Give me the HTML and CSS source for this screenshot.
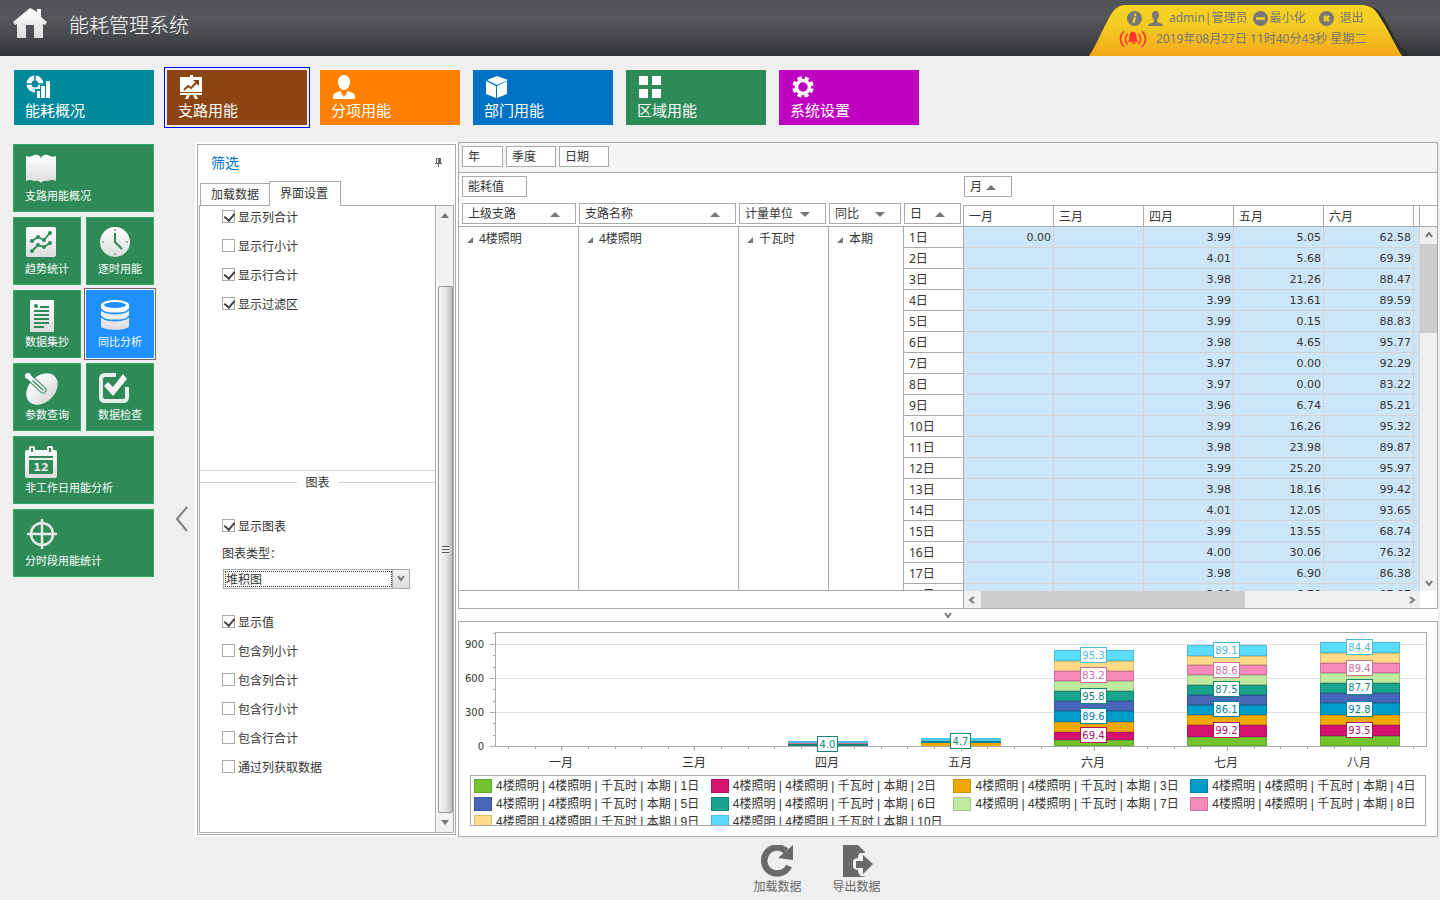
FILE: index.html
```html
<!DOCTYPE html>
<html lang="zh-CN">
<head>
<meta charset="utf-8">
<title>能耗管理系统</title>
<link rel="stylesheet" href="styles.css">
</head>
<body>
<div class="app">
  <header class="topbar">
    <svg class="home" viewBox="0 0 36 32"><defs><linearGradient id="silver" x1="0" y1="0" x2="0" y2="1"><stop offset="0" stop-color="#fff"/><stop offset="1" stop-color="#dcdcdc"/></linearGradient></defs><path fill="url(#silver)" d="M18 0 1 14l2 3 2-1v14h9V17h8v13h9V16l2 1 2-3-6-5V1h-4v3l-3-2z"/></svg>
    <h1>能耗管理系统</h1>
    <div class="account">
      <svg class="account-bg" viewBox="0 0 330 51"><defs><linearGradient id="gold" x1="0" y1="0" x2="0" y2="1"><stop offset="0" stop-color="#f6d422"/><stop offset=".4" stop-color="#f3cc22"/><stop offset="1" stop-color="#f3a81b"/></linearGradient></defs><path fill="#2b2e31" d="M0 51c12-3 12-19 21-35C27 4 34 0 42 0h230c14 0 20 5 27 18 9 16 12 30 31 33z"/><path fill="url(#gold)" d="M1 51c8-12 12-24 20-38C27 2 31 0 39 0h232c10 0 16 2 22 14 9 14 13 24 21 37z"/></svg>
      <div class="account-row">
        <svg class="i15" viewBox="0 0 15 15"><circle cx="7.500" cy="7.500" r="7.500" fill="#777"/><path d="M8.500 2.500 8 5M8 6l-1.500 6" stroke="#f5d020" stroke-width="2" fill="none"/></svg>
        <svg class="i15" viewBox="0 0 15 15"><path fill="#777" d="M7.500 0C5 0 4 2 4 4c0 2 1 4 2 5v2l-5 2-1 2h15l-1-2-5-2V9c1-1 2-3 2-5 0-2-1-4-3.500-4z"/></svg>
        <span class="user">admin|管理员</span>
        <button><svg class="i15" viewBox="0 0 15 15"><circle cx="7.500" cy="7.500" r="7.500" fill="#777"/><path d="M3 7.500h9" stroke="#f5d020" stroke-width="2.500"/></svg>最小化</button>
        <button class="quit"><svg class="i15" viewBox="0 0 15 15"><circle cx="7.500" cy="7.500" r="7.500" fill="#777"/><path d="m5 5 5 5m0-5-5 5" stroke="#f5d020" stroke-width="2.500"/></svg>退出</button>
      </div>
      <div class="account-row date">
        <svg class="bell" viewBox="0 0 30 20"><g fill="none" stroke="#f33" stroke-width="1.600"><path d="M5 1q-8 9 0 18M9 4q-5 6 0 12M25 1q8 9 0 18M21 4q5 6 0 12"/></g><path fill="#f33" d="M15 2c-3 0-4 3-4 6 0 3-1 4-2 5h12c-1-1-2-2-2-5 0-3-1-6-4-6zm-2 12h5l-2 2z"/></svg>
        <time>2019年08月27日 11时40分43秒 星期二</time>
      </div>
    </div>
  </header>

  <nav class="modules">
    <button class="module teal"><svg viewBox="0 0 26 24"><circle cx="9" cy="9" r="6" fill="none" stroke="#fff" stroke-width="5"/><path d="M9 0v7M0 9h6M12 9h6" stroke="#00889c" stroke-width="1.500"/><path d="M9 14h5v-4h5V5h7v19H9z" fill="#00889c"/><path fill="#fff" d="M11 16h3v7h-3zM15 11h4v12h-4zM20 6h4v17h-4z"/></svg>能耗概况</button>
    <button class="module brown selected"><svg viewBox="0 0 26 24"><path fill="#fff" d="M11 0h3v2h-3zM1 2h22v2H1zM1 4h22v13H1zM1 18h22v2H1zM8 20h3l-2 4H6zM14 20h3l2 4h-3z"/><path d="m5 15 4-4 3 2 6-6" fill="none" stroke="#8b4513" stroke-width="2"/><path fill="#8b4513" d="M14 5h6v6z"/></svg>支路用能</button>
    <button class="module orange"><svg viewBox="0 0 26 24"><path fill="#fff" d="M12 0C8 0 6 3 6 7c0 3 2 8 6 8s6-5 6-8c0-4-2-7-6-7zM8 16l-5 2c-2 1-2 3-2 6h22c0-3 0-5-2-6l-5-2-4 6z"/></svg>分项用能</button>
    <button class="module blue"><svg viewBox="0 0 26 24"><path fill="#fff" d="m12 1 11 4-11 5L2 5zM1 6l10 5v12L1 19zM22 6v13l-10 4V11z"/></svg>部门用能</button>
    <button class="module green"><svg viewBox="0 0 26 24"><path fill="#fff" d="M1 1h9v9H1zM14 1h9v9h-9zM1 14h9v9H1zM14 14h9v9h-9z"/></svg>区域用能</button>
    <button class="module purple"><svg viewBox="0 0 26 24"><circle cx="12" cy="12" r="6.500" fill="none" stroke="#fff" stroke-width="3.500"/><circle cx="12" cy="12" r="2" fill="none" stroke="#fff" stroke-width="0"/><circle cx="12" cy="12" r="9" fill="none" stroke="#fff" stroke-width="3.500" stroke-dasharray="4.100 2.970" transform="rotate(9 12 12)"/></svg>系统设置</button>
  </nav>

  <div class="body">
    <aside class="sidebar">
      <button class="tile wide"><svg viewBox="0 0 32 32"><path fill="url(#silver)" d="M1 2q4 2 8-1 5-1 7 3 2-4 7-3 4 3 8 1v25q-4-2-8 0-5-1-7 2-2-3-7-2-4-2-8 0z"/></svg>支路用能概况</button>
      <button class="tile"><svg viewBox="0 0 32 32"><rect x="1" y="0" width="30" height="30" rx="2" fill="url(#silver)"/><g stroke="#2e8b57" stroke-width="1.800" fill="none"><path d="m7 14 6-4 6 3 6-7M7 24l6-6 6 2 6-4"/></g><g fill="#2e8b57"><circle cx="7" cy="14" r="2"/><circle cx="13" cy="10" r="2"/><circle cx="19" cy="13" r="2"/><circle cx="25" cy="6" r="2"/><circle cx="7" cy="24" r="2"/><circle cx="13" cy="18" r="2"/><circle cx="19" cy="20" r="2"/><circle cx="25" cy="16" r="2"/></g></svg>趋势统计</button>
      <button class="tile"><svg viewBox="0 0 32 32"><circle cx="17" cy="15" r="15" fill="url(#silver)"/><path d="M17 6v9l7 7" fill="none" stroke="#2e8b57" stroke-width="2"/><path fill="#8ab8a0" d="M16 2h2v2h-2zM16 26h2v2h-2zM4 14h2v2H4zM28 14h2v2h-2z"/></svg>逐时用能</button>
      <button class="tile"><svg viewBox="0 0 32 32"><rect x="5" y="0" width="24" height="32" rx="1" fill="url(#silver)"/><circle cx="11" cy="6" r="2" fill="#2e8b57"/><path d="M15 7h9M9 11h15M9 15h15M9 19h15M9 23h15M9 27h10" stroke="#2e8b57" stroke-width="2"/></svg>数据集抄</button>
      <button class="tile selected"><svg viewBox="0 0 32 32"><path fill="url(#silver)" d="M3 5v21c0 5 28 5 28 0V5z"/><ellipse cx="17" cy="5" rx="14" ry="5" fill="#fff"/><ellipse cx="17" cy="5" rx="11" ry="3" fill="#1e90ff"/><path d="M3 9c2 6 26 6 28 0M3 16c2 6 26 6 28 0" fill="none" stroke="#1e90ff" stroke-width="1.800"/></svg>同比分析</button>
      <button class="tile"><svg viewBox="0 0 32 32"><ellipse cx="17" cy="16" rx="18" ry="13" transform="rotate(-45 17 16)" fill="url(#silver)"/><g stroke-linecap="round"><path d="m4 4 14 13" stroke="#2e8b57" stroke-width="7"/><path d="m4 4 14 13" stroke="#fff" stroke-width="5"/><path d="m8 8 10 9" stroke="#2e8b57" stroke-width="1.500"/></g><circle cx="3" cy="3" r="3" fill="#fff"/></svg>参数查询</button>
      <button class="tile"><svg viewBox="0 0 32 32"><path d="M18 2H7Q3 2 3 6v18q0 4 4 4h18q4 0 4-4V14" fill="none" stroke="#e8eeea" stroke-width="4"/><path fill="#f4f4f4" d="m6 13 4-4 5 5L25 1l4 5-14 17z"/></svg>数据检查</button>
      <button class="tile wide"><svg viewBox="0 0 32 32"><path fill="url(#silver)" d="M2 4h2V1q3-2 6 0v3h12V1q3-2 6 0v3h2q2 0 2 2v24q0 2-2 2H2q-2 0-2-2V6q0-2 2-2z"/><path fill="#2e8b57" d="M6 2h2v4H6zM24 2h2v4h-2zM4 10h24v2H4zM4 14h24v14H4z"/><text x="16" y="25" text-anchor="middle" class="cal">12</text></svg>非工作日用能分析</button>
      <button class="tile wide"><svg viewBox="0 0 32 32"><g fill="none" stroke="#e6ece8" stroke-width="2.500"><circle cx="17" cy="15" r="11"/><path d="M17 0v30M2 15h30"/></g></svg>分时段用能统计</button>
    </aside>
    <button class="collapse" aria-label="收起"><svg viewBox="0 0 14 26"><path d="M12 1 2 13l10 12" fill="none" stroke="#808080" stroke-width="2"/></svg></button>

    <div class="main">
      <div class="work">
        <section class="options">
          <div class="options-head"><h2>筛选</h2><svg viewBox="0 0 8 9"><path d="M2 0h5v5h1v1H5v3H4V6H1V5h1z" fill="#666"/><path d="M3 1h1v4H3z" fill="#fff"/></svg></div>
          <div class="tabs"><button>加载数据</button><button class="active">界面设置</button></div>
          <div class="options-body">
            <div class="options-content">
              <div class="group first">
                <label><input type="checkbox" checked>显示列合计</label>
                <label><input type="checkbox">显示行小计</label>
                <label><input type="checkbox" checked>显示行合计</label>
                <label><input type="checkbox" checked>显示过滤区</label>
              </div>
              <fieldset class="group">
                <legend>图表</legend>
                <label><input type="checkbox" checked>显示图表</label>
                <label class="caption" for="kind">图表类型：</label>
                <div class="combo"><select id="kind"><option>堆积图</option></select><svg viewBox="0 0 8 8"><path d="m1 1 3 4 3-4" fill="none" stroke="#777" stroke-width="2"/></svg></div>
                <label><input type="checkbox" checked>显示值</label>
                <label><input type="checkbox">包含列小计</label>
                <label><input type="checkbox">包含列合计</label>
                <label><input type="checkbox">包含行小计</label>
                <label><input type="checkbox">包含行合计</label>
                <label><input type="checkbox">通过列获取数据</label>
              </fieldset>
            </div>
            <div class="classic-bar"><i class="up"></i><div class="classic-thumb"><b></b></div><i class="down"></i></div>
          </div>
        </section>

        <div class="data">
          <section class="pivot">
            <div class="filter-bar"><button class="field w41">年</button><button class="field w50">季度</button><button class="field w50">日期</button></div>
            <div class="pivot-grid">
              <div class="data-fields"><button class="field w65">能耗值</button></div>
              <div class="column-fields"><button class="field w48">月<i class="up"></i></button></div>
              <div class="row-fields">
                <button class="field">上级支路<i class="up"></i></button><button class="field">支路名称<i class="up"></i></button><button class="field">计量单位<i class="down"></i></button><button class="field">同比<i class="down"></i></button><button class="field">日<i class="up"></i></button>
              </div>
              <div class="months"><span>一月</span><span>三月</span><span>四月</span><span>五月</span><span>六月</span><span></span></div>
              <div class="months-end"></div>
              <div class="row-area"><table id="rows"></table></div>
              <div class="cell-area"><table id="cells"></table></div>
              <div class="vbar"><svg viewBox="0 0 8 8"><path d="m1 6 3-4 3 4"/></svg><div class="vthumb"></div><svg class="last" viewBox="0 0 8 8"><path d="m1 2 3 4 3-4"/></svg></div>
              <div class="row-foot"></div>
              <div class="hbar"><svg viewBox="0 0 8 8"><path d="M6 1 2 4l4 3"/></svg><div class="hthumb"></div><svg class="last" viewBox="0 0 8 8"><path d="m2 1 4 3-4 3"/></svg></div>
              <div></div>
            </div>
          </section>
          <button class="splitter" aria-label="折叠图表"><svg viewBox="0 0 8 8"><path d="m1 2 3 4 3-4" fill="none" stroke="#777" stroke-width="2"/></svg></button>
          <section class="chart-panel">
            <svg id="chart" viewBox="459 622 978 150"></svg>
            <ul class="legend" id="legend"></ul>
          </section>
        </div>
      </div>
      <footer class="actions">
        <button><svg viewBox="0 0 32 32"><path d="M25 6A13 13 0 1 0 28 21" fill="none" stroke="#696969" stroke-width="6.500"/><path fill="#696969" d="M32 0v15l-15-2z"/></svg>加载数据</button>
        <button><svg viewBox="0 0 32 32"><path fill="#696969" d="M2 0h15l7 7v1h-5q-2 1-2 5-4 0-5 3v6q1 3 5 3 0 4 3 6l5 1H2z"/><path fill="#696969" d="M15 16h7v-6l10 9-10 10v-6h-7z"/></svg>导出数据</button>
      </footer>
    </div>
  </div>
</div>
<script src="app.js"></script>
</body>
</html>
```
FILE: styles.css
```css
* { box-sizing: border-box; }
body { margin: 0; background: #efefef; color: #333; font: 12px/16px "Noto Sans", "Noto Sans CJK SC", sans-serif; }
button { margin: 0; padding: 0; border: 0; background: none; color: inherit; font: inherit; text-align: left; white-space: nowrap; }
h1, h2, ul { margin: 0; padding: 0; font-weight: 400; }
svg { display: block; flex: none; }
table { border-collapse: separate; border-spacing: 0; table-layout: fixed; }
.app { display: flex; flex-direction: column; height: 100vh; min-height: 760px; }

.topbar { flex: none; display: flex; align-items: flex-start; height: 56px; padding-left: 12px; background: linear-gradient(#525357, #56575b 30%, #4b4c50 60%, #303336); }
.home { width: 36px; height: 32px; margin-top: 8px; }
.topbar h1 { margin: 12px auto 0 21px; color: #fff; font-size: 20px; line-height: 28px; font-weight: 300; }
.account { position: relative; width: 330px; height: 51px; margin: 5px 22px 0 0; color: #777; }
.account-bg { position: absolute; inset: 0; width: 100%; height: 100%; }
.account-row { position: relative; display: flex; align-items: center; height: 23px; padding: 3px 0 0 39px; }
.account-row.date { height: 20px; padding: 2px 0 0 31px; }
.account-row button { display: flex; align-items: center; gap: 1px; margin-left: 6px; }
.account-row .quit { gap: 5px; margin-left: 14px; }
.i15 { width: 15px; height: 15px; }
.account-row > .i15 { margin-right: 6px; }
.bell { width: 28px; height: 18px; margin-right: 9px; }

.modules { flex: none; display: flex; gap: 13px; padding: 14px 14px 17px; }
.module { width: 140px; height: 55px; padding: 5px 11px; color: #fff; font-size: 15px; line-height: 22px; }
.module svg { width: 26px; height: 24px; margin-left: 1px; }
.module.selected { outline: 1px solid #00f; outline-offset: 2px; }
.teal { background: #00889c; }
.brown { background: #8b4513; }
.orange { background: #ff8000; }
.blue { background: #0072c6; }
.green { background: #2e8b57; }
.purple { background: #c000c0; }

.body { flex: 1; display: flex; min-height: 0; }
.sidebar { flex: none; display: grid; grid-template-columns: 68px 68px; grid-auto-rows: 68px; gap: 5px; padding: 2px 0 0 13px; }
.tile { padding: 9px 11px; border: 1px solid #32a963; background: #2e8b57; color: #fff; font-size: 11px; line-height: 20px; }
.tile svg { width: 32px; height: 32px; overflow: visible; }
.tile.wide { grid-column: span 2; }
.tile.selected { border-color: #1e90ff; background: #1e90ff; outline: 1px solid #666; outline-offset: 1px; box-shadow: 0 0 0 1px #fff; }
.cal { fill: #eee; font: bold 11px "DejaVu Sans", sans-serif; }
.collapse { flex: none; width: 41px; padding: 0 0 4px 21px; }
.collapse svg { width: 14px; height: 26px; }

.main { flex: 1; display: flex; flex-direction: column; min-width: 0; padding-right: 2px; }
.work { flex: 1; display: flex; min-height: 0; gap: 2px; padding-left: 2px; background: #fff; }

.options { flex: none; display: flex; flex-direction: column; width: 259px; margin: 2px 0; padding: 0 1px 1px; border: 1px solid #aaa; }
.options-head { flex: none; display: flex; align-items: center; justify-content: space-between; height: 35px; padding: 0 12px; }
.options-head h2 { color: #0072c6; font-size: 14px; line-height: 20px; }
.options-head svg { width: 8px; height: 9px; }
.tabs { flex: none; display: flex; align-items: flex-end; height: 25px; padding-left: 1px; }
.tabs button { width: 70px; height: 22px; padding-left: 10px; border: 1px solid #aaa; border-bottom: 0; }
.tabs .active { width: 72px; height: 25px; margin: 0 0 -1px -1px; background: #fff; z-index: 1; }
.options-body { flex: 1; display: flex; min-height: 0; border: 1px solid #aaa; }
.options-content { flex: 1; overflow: hidden; border-right: 1px solid #aaa; margin-right: 1px; }
.group { display: flex; flex-direction: column; gap: 6px; min-width: 0; margin: 0; border: 0 solid #d5d5d5; border-top-width: 1px; padding: 21px 22px 0; }
.group.first { height: 265px; border-width: 0 0 1px; padding-top: 0; }
.group legend { height: 23px; margin: 0 auto; padding: 0 8px; line-height: 23px; }
.group label { display: flex; align-items: center; gap: 3px; height: 23px; line-height: 18px; }
.group .caption { height: 19px; }
.group input { appearance: none; width: 13px; height: 13px; margin: 0 0 2px; border: 1px solid #aaa; background: #fff; }
.group input:checked::after { content: ""; display: block; width: 5px; height: 8px; margin: 0 0 0 3px; border: solid #444; border-width: 0 2px 2px 0; transform: rotate(40deg); }
.combo { display: flex; align-items: center; width: 187px; height: 20px; margin: 0 0 16px 1px; padding-right: 4px; border: 1px solid #aaa; background: linear-gradient(#f2f2f2, #ddd); }
.combo select { appearance: none; flex: 1; height: 18px; margin-right: 4px; padding: 1px 2px 0; border: 0; border-right: 1px solid #aaa; border-radius: 0; outline: 1px dotted #333; outline-offset: -2px; background: #fff; color: #333; font: inherit; }
.combo svg { width: 8px; height: 8px; }
.classic-bar { display: flex; flex-direction: column; align-items: center; width: 16px; background: #f2f2f2; }
.up, .down { flex: none; border: 5px solid transparent; }
.up { border-top: 0; border-bottom-color: #777; }
.down { border-bottom: 0; border-top-color: #777; }
.classic-bar i { margin: 7px 0; border-right-width: 4px; border-left-width: 4px; }
.classic-thumb { flex: 1; display: flex; align-items: center; justify-content: center; width: 15px; margin-top: 61px; border: 1px solid #999; border-radius: 2px; background: linear-gradient(90deg, #f6f6f6, #e6e6e6 50%, #bcbdc0); }
.classic-thumb b { width: 7px; height: 8px; background: repeating-linear-gradient(#555 0 1px, #eee 1px 3px); }

.data { flex: 1; display: flex; flex-direction: column; min-width: 0; }
.pivot { flex: 1; display: flex; flex-direction: column; min-height: 0; border: 1px solid #aaa; }
.filter-bar { flex: none; display: flex; gap: 3px; height: 30px; padding: 3px; border-bottom: 1px solid #aaa; background: #f5f5f5; }
.field { display: flex; align-items: center; height: 21px; padding: 1px 5px 0; border: 1px solid #aaa; background: #fff; }
.w41 { width: 41px; }
.w50 { width: 50px; }
.w65 { width: 65px; }
.w48 { width: 48px; gap: 4px; }
.pivot-grid { flex: 1; display: grid; grid-template-columns: 505px minmax(0, 1fr) 17px; grid-template-rows: 30px 24px minmax(0, 1fr) 17px; min-height: 0; }
.data-fields { padding: 3px; }
.column-fields { grid-column: span 2; padding-top: 3px; }
.row-fields { display: grid; grid-template-columns: 114px 157px 87px 72px 57px; gap: 3px; padding-left: 3px; border-bottom: 1px solid #aaa; }
.row-fields .field { justify-content: space-between; padding-right: 15px; }
.months, .months-end { margin-top: 2px; border: solid #aaa; border-width: 1px 0; }
.months { display: flex; margin-left: -1px; border-left-width: 1px; }
.months span { flex: 90; padding-left: 5px; border-right: 1px solid #aaa; line-height: 22px; }
.months span:last-child { flex: 0 0 6px; padding: 0; }
.row-area, .cell-area { overflow: hidden; border-bottom: 1px solid #aaa; }
.cell-area { border: 0; background: #cde6f7; }
.row-area table { width: 505px; }
.row-area td, .row-area th { height: 21px; padding: 1px 5px 0; border-right: 1px solid #aaa; font-weight: 400; text-align: left; line-height: 19px; }
.row-area th { border-bottom: 1px solid #aaa; }
.row-area td { padding: 2px 8px; vertical-align: top; }
.expand { display: inline-block; width: 6px; height: 6px; margin-right: 6px; background: #777; clip-path: polygon(100% 0, 100% 100%, 0 100%); }
.cell-area table { width: 100%; }
.cell-area td { height: 21px; padding: 1px 2px 0 0; border: solid #d3d3d3; border-width: 0 1px 1px 0; font: 11px/19px "DejaVu Sans", sans-serif; text-align: right; }
.c120 { width: 120px; }
.c160 { width: 160px; }
.c90 { width: 90px; }
.c75 { width: 75px; }
.c60 { width: 60px; }
.c6 { width: 6px; }
.vbar, .hbar { display: flex; background: #f0f0f0; }
.vbar { flex-direction: column; align-items: center; }
.hbar { align-items: center; }
.vbar svg, .hbar svg { width: 8px; height: 8px; margin: 4px; fill: none; stroke: #777; stroke-width: 2; }
.vthumb { width: 17px; height: 89px; margin-top: 1px; background: #cdcdcd; }
.hthumb { width: 58%; height: 17px; margin-left: 1px; background: #cdcdcd; }
.vbar .last { margin-top: auto; }
.hbar .last { margin-left: auto; }
.row-foot { border-right: 1px solid #aaa; }
.splitter { flex: none; display: flex; align-items: center; justify-content: center; height: 12px; }
.splitter svg { width: 8px; height: 8px; }

.chart-panel { flex: none; border: 1px solid #aaa; padding-bottom: 10px; }
#chart { width: 100%; }
#chart text { fill: #333; font-size: 12px; text-anchor: middle; }
#chart .axis { font: 10px "DejaVu Sans", sans-serif; text-anchor: end; }
#chart .value { font: 10px "DejaVu Sans", sans-serif; }
.legend { display: grid; grid-template-columns: 237fr 243fr 237fr 235fr; grid-auto-rows: 18px; height: 51px; margin: 3px 11px 0; padding: 1px 0 0 3px; border: 1px solid #aaa; overflow: hidden; list-style: none; font-family: "Liberation Sans", "Noto Sans CJK SC", sans-serif; white-space: nowrap; }
.legend li { display: flex; align-items: center; gap: 4px; }
.legend i { width: 18px; height: 14px; border: 1px solid; }

.actions { flex: none; display: flex; justify-content: center; gap: 31px; height: 63px; padding: 8px 0 0 1px; color: #666; }
.actions svg { width: 32px; height: 32px; margin: 0 auto 2px; }
.actions button { align-self: flex-start; }
```
FILE: app.js
```js
const days = [
  ["0.00", "", "3.99", "5.05", "62.58"], ["", "", "4.01", "5.68", "69.39"],
  ["", "", "3.98", "21.26", "88.47"], ["", "", "3.99", "13.61", "89.59"],
  ["", "", "3.99", "0.15", "88.83"], ["", "", "3.98", "4.65", "95.77"],
  ["", "", "3.97", "0.00", "92.29"], ["", "", "3.97", "0.00", "83.22"],
  ["", "", "3.96", "6.74", "85.21"], ["", "", "3.99", "16.26", "95.32"],
  ["", "", "3.98", "23.98", "89.87"], ["", "", "3.99", "25.20", "95.97"],
  ["", "", "3.98", "18.16", "99.42"], ["", "", "4.01", "12.05", "93.65"],
  ["", "", "3.99", "13.55", "68.74"], ["", "", "4.00", "30.06", "76.32"],
  ["", "", "3.98", "6.90", "86.38"], ["", "", "3.98", "6.78", "87.87"]
];
const groups = ["4楼照明", "4楼照明", "千瓦时", "本期"];
const cols = names => "<colgroup>" + names.map(n => `<col class="${n}">`).join("") + "</colgroup>";

document.getElementById("rows").innerHTML = cols(["c120", "c160", "c90", "c75", "c60"]) +
  days.map((d, i) => "<tr>" + (i ? "" : groups.map(g => `<td rowspan="${days.length}"><i class="expand"></i>${g}</td>`).join("")) + `<th>${i + 1}日</th></tr>`).join("");
document.getElementById("cells").innerHTML = cols(["", "", "", "", "", "c6"]) +
  days.map(d => "<tr>" + d.map(v => `<td>${v}</td>`).join("") + "<td></td></tr>").join("");

const series = [
  ["#73c42d", "#5faa2c"], ["#d6126f", "#b01060"], ["#efa900", "#cc9000"], ["#009dc9", "#0080a5"], ["#4867b9", "#3a549b"],
  ["#18a38f", "#128675"], ["#c1e9a0", "#a0c588"], ["#f68ab9", "#cf6f9f"], ["#ffdd88", "#dabb70"], ["#5cddff", "#4cb9d8"]
];
document.getElementById("legend").innerHTML = series.map(([fill, line], i) =>
  `<li><i style="background:${fill};border-color:${line}"></i>4楼照明 | 4楼照明 | 千瓦时 | 本期 | ${i + 1}日</li>`).join("");

const stacks = [
  { x: 1094, edges: [746, 740, 732, 722, 711, 701, 691, 681, 671, 661, 650], labels: [[1, 735, "69.4"], [3, 716, "89.6"], [5, 696, "95.8"], [7, 675, "83.2"], [9, 655, "95.3"]] },
  { x: 1227, edges: [746, 737, 725, 715, 705, 695, 685, 675, 665, 656, 645], labels: [[1, 730, "99.2"], [3, 709, "86.1"], [5, 689, "87.5"], [7, 670, "88.6"], [9, 650, "89.1"]] },
  { x: 1360, edges: [746, 736, 725, 715, 703, 693, 683, 673, 663, 653, 642], labels: [[1, 730, "93.5"], [3, 709, "92.8"], [5, 687, "87.7"], [7, 668, "89.4"], [9, 647, "84.4"]] }
];
const rect = (x, y, w, h, fill) => `<rect x="${x}" y="${y}" width="${w}" height="${h}" fill="${fill}"/>`;
const valueBox = (x, y, text, s) => {
  const w = text.length > 3 ? 26 : 20, c = series[s][1];
  return `<rect x="${x - w / 2 - .5}" y="${y - 7.5}" width="${w}" height="15" fill="#fff" stroke="${c}"/><text class="value" x="${x - .5}" y="${y + 4}" style="fill:${c}">${text}</text>`;
};
let svg = "";
for (const [v, y] of [[900, 644], [600, 678], [300, 712], [0, 746]]) {
  svg += rect(495, y, 932, 1, "#e0e0e0") + rect(490, y, 5, 1, "#aaa") + `<text class="axis" x="484" y="${y + 4}">${v}</text>`;
}
for (let i = 1; i <= 10; i++) if (i % 3) svg += rect(493, Math.round(746 - i * 34 / 3), 2, 1, "#aaa");
svg += `<rect x="495.5" y="632.5" width="931" height="114" fill="none" stroke="#aaa"/>`;
for (let i = 0; i <= 34; i++) {
  const x = Math.round(508 + i * 26.63);
  svg += rect(x, 747, 1, i % 5 === 2 ? 4 : 2, "#aaa");
}
["一月", "三月", "四月", "五月", "六月", "七月", "八月"].forEach((m, i) => {
  svg += `<text x="${561 + i * 133}" y="767">${m}</text>`;
});
svg += rect(788, 741, 80, 3, "#4cb9d8") + rect(788, 743, 80, 1, "#cf6f9f") + rect(788, 744, 80, 2, "#128675");
svg += rect(921, 738, 80, 3, "#4cc8ea") + rect(921, 741, 80, 2, "#128090") + rect(921, 743, 80, 3, "#efa900");
svg += valueBox(828, 744, "4.0", 5) + valueBox(961, 741, "4.7", 5);
for (const { x, edges, labels } of stacks) {
  series.forEach(([fill, line], i) => {
    const top = edges[i + 1], h = edges[i] - top;
    svg += `<rect x="${x - 39.5}" y="${top + .5}" width="79" height="${h - 1}" fill="${fill}" stroke="${line}"/>`;
  });
  labels.forEach(([s, y, text]) => { svg += valueBox(x, y, text, s); });
}
document.getElementById("chart").innerHTML = svg;
```
